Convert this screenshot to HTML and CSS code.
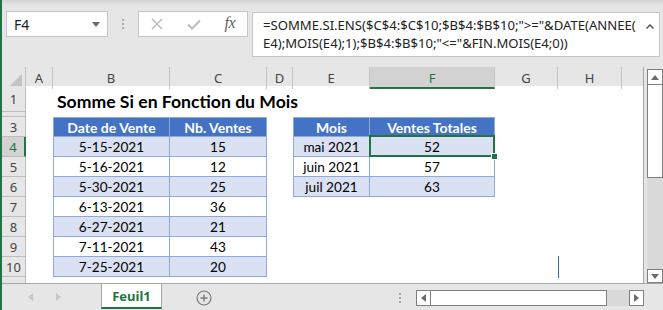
FILE: index.html
```html
<!DOCTYPE html>
<html lang="fr">
<head>
<meta charset="utf-8">
<title>Somme Si en Fonction du Mois</title>
<link rel="stylesheet" href="styles.css">
</head>
<body>
<div class="app">
  <header class="fbar">
    <div class="namebox">
      <span class="nb-text">F4</span>
      <svg class="nb-arrow" width="8" height="5" viewBox="0 0 8 5"><path d="M0 0H8L4 5Z" fill="#6b6b6b"/></svg>
    </div>
    <div class="grip"><i></i><i></i><i></i></div>
    <div class="fbtns">
      <svg width="12" height="12" viewBox="0 0 12 12"><path d="M1 1L11 11M11 1L1 11" stroke="#bcbcbc" stroke-width="1.5" fill="none"/></svg>
      <svg width="14" height="11" viewBox="0 0 14 11"><path d="M1 5.5L5 9.5L13 1.5" stroke="#bcbcbc" stroke-width="2" fill="none"/></svg>
      <span class="fx">fx</span>
    </div>
    <div class="formula">
      <div class="ftext">=SOMME.SI.ENS($C$4:$C$10;$B$4:$B$10;"&gt;="&amp;DATE(ANNEE(<br>E4);MOIS(E4);1);$B$4:$B$10;"&lt;="&amp;FIN.MOIS(E4;0))</div>
      <svg class="caret" width="8" height="5" viewBox="0 0 8 5"><path d="M0.5 4.5L4 1L7.5 4.5" stroke="#555" stroke-width="1.5" fill="none"/></svg>
    </div>
  </header>

  <div class="main">
    <div class="sheet">
      <div class="row r-hdr">
        <div class="corner"><span class="tri"></span></div>
        <div class="ch">A</div><div class="ch">B</div><div class="ch">C</div><div class="ch">D</div>
        <div class="ch">E</div><div class="ch sel">F</div><div class="ch">G</div><div class="ch">H</div><div class="ch last"></div>
      </div>
      <div class="row r-1">
        <div class="rh">1</div><div></div>
        <div class="title">Somme Si en Fonction du Mois</div>
      </div>
      <div class="row r-2">
        <div class="rh"></div>
      </div>
      <div class="row r-n">
        <div class="rh">3</div><div></div>
        <div class="t th first">Date de Vente</div><div class="t th">Nb. Ventes</div><div></div>
        <div class="t th first">Mois</div><div class="t th">Ventes Totales</div>
      </div>
      <div class="row r-n">
        <div class="rh sel">4</div><div></div>
        <div class="t band first">5-15-2021</div><div class="t band">15</div><div></div>
        <div class="t band first">mai 2021</div><div class="t band active">52</div>
      </div>
      <div class="row r-n">
        <div class="rh">5</div><div></div>
        <div class="t first">5-16-2021</div><div class="t">12</div><div></div>
        <div class="t first">juin 2021</div><div class="t">57</div>
      </div>
      <div class="row r-n">
        <div class="rh">6</div><div></div>
        <div class="t band first">5-30-2021</div><div class="t band">25</div><div></div>
        <div class="t band first">juil 2021</div><div class="t band">63</div>
      </div>
      <div class="row r-n">
        <div class="rh">7</div><div></div>
        <div class="t first">6-13-2021</div><div class="t">36</div>
      </div>
      <div class="row r-n">
        <div class="rh">8</div><div></div>
        <div class="t band first">6-27-2021</div><div class="t band">21</div>
      </div>
      <div class="row r-n">
        <div class="rh">9</div><div></div>
        <div class="t first">7-11-2021</div><div class="t">43</div>
      </div>
      <div class="row r-n">
        <div class="rh">10</div><div></div>
        <div class="t band first">7-25-2021</div><div class="t band">20</div>
        <div></div><div></div><div></div><div></div><div class="cursor"></div>
      </div>
      <div class="row r-last">
        <div class="rh cut">11</div>
      </div>
    </div>
    <div class="vscroll">
      <div class="sbtn up"><svg width="8" height="5" viewBox="0 0 8 5"><path d="M0 5H8L4 0Z" fill="#6b6b6b"/></svg></div>
      <div class="vthumb"></div>
      <div class="vtrack"></div>
      <div class="sbtn down"><svg width="8" height="5" viewBox="0 0 8 5"><path d="M0 0H8L4 5Z" fill="#6b6b6b"/></svg></div>
    </div>
  </div>

  <footer class="tabbar">
    <div class="nav">
      <svg class="nl" width="5" height="8" viewBox="0 0 5 8"><path d="M5 0V8L0 4Z" fill="#c8c8c8"/></svg>
      <svg class="nr" width="5" height="8" viewBox="0 0 5 8"><path d="M0 0V8L5 4Z" fill="#c8c8c8"/></svg>
    </div>
    <div class="tab">Feuil1</div>
    <svg class="plus" width="16" height="16" viewBox="0 0 16 16"><circle cx="8" cy="8" r="7" stroke="#7a7a7a" stroke-width="1.2" fill="none"/><path d="M8 4.5V11.5M4.5 8H11.5" stroke="#7a7a7a" stroke-width="1.4"/></svg>
    <div class="grip tgrip"><i></i><i></i><i></i></div>
    <div class="hscroll">
      <div class="hbtn"><svg width="5" height="8" viewBox="0 0 5 8"><path d="M5 0V8L0 4Z" fill="#6b6b6b"/></svg></div>
      <div class="hthumb"></div>
      <div class="htrack"></div>
      <div class="hbtn right"><svg width="5" height="8" viewBox="0 0 5 8"><path d="M0 0V8L5 4Z" fill="#6b6b6b"/></svg></div>
    </div>
  </footer>
</div>
</body>
</html>
```

FILE: styles.css
```css
* { box-sizing: border-box; }
html, body { margin: 0; padding: 0; }
body { width: 663px; height: 310px; overflow: hidden; background: #e6e6e6; }

.app {
  width: 663px;
  height: 310px;
  border-left: 2px solid #217346;
  background: #e6e6e6;
  font-family: "Noto Sans", "Open Sans", sans-serif;
  color: #222;
}

/* formula bar */
.fbar {
  height: 67px;
  display: flex;
  align-items: flex-start;
  padding: 11px 0 0 4px;
  background: linear-gradient(#d4d4d4 0, #e6e6e6 6px);
}
.namebox {
  width: 102px;
  height: 26px;
  background: #fff;
  border: 1px solid #c6c6c6;
  display: flex;
  align-items: center;
  padding: 0 7px 0 7px;
  font-size: 14px;
}
.nb-text { flex: 1; color: #222; }
.grip {
  width: 2px;
  margin: 8px 14px 0 14px;
  display: flex;
  flex-direction: column;
  gap: 2px;
}
.grip i { display: block; width: 2px; height: 2px; background: #a8a8a8; }
.fbtns {
  width: 110px;
  height: 26px;
  background: #fff;
  border: 1px solid #c6c6c6;
  display: flex;
  align-items: center;
  justify-content: space-around;
}
.fx {
  font-family: "Liberation Serif", serif;
  font-style: italic;
  font-size: 16px;
  color: #606060;
  letter-spacing: -0.5px;
  line-height: 1;
  margin-top: -2px;
}
.formula {
  width: 408px;
  height: 45px;
  margin-left: 4px;
  margin-top: 1px;
  background: #fff;
  border: 1px solid #c6c6c6;
  display: flex;
  align-items: flex-start;
  padding: 3px 5px 0 10px;
}
.ftext {
  flex: 1;
  font-size: 13.1px;
  line-height: 18px;
  color: #222;
  white-space: nowrap;
  overflow: hidden;
}
.caret { margin-top: 8px; flex: none; }

/* sheet */
.main { display: flex; height: 216px; }
.sheet {
  width: 642px;
  height: 216px;
  background: #fff;
  border-right: 1px solid #a6a6a6;
}
.row {
  display: grid;
  grid-template-columns: 24px 27px 117px 97px 26px 77px 125px 63px 64px 21px;
}
.r-hdr { height: 19px; background: #e6e6e6; }
.r-1 { height: 26px; }
.r-2 { height: 5px; }
.r-n { height: 20px; }
.r-last { height: 6px; overflow: hidden; }

.corner { position: relative; border-right: 1px solid #c4c4c4; }
.tri {
  position: absolute;
  right: 3px;
  bottom: 3px;
  width: 12px;
  height: 12px;
  background: #c3c3c3;
  clip-path: polygon(100% 0, 100% 100%, 0 100%);
}
.ch {
  border-right: 1px solid #c4c4c4;
  font-size: 13px;
  color: #444;
  display: flex;
  align-items: center;
  justify-content: center;
}
.ch.last { border-right: 0; }
.ch.sel {
  background: #d2d2d2;
  color: #217346;
  border-bottom: 2px solid #217346;
  padding-top: 2px;
}

.rh {
  background: #e6e6e6;
  border-right: 1px solid #bdbdbd;
  border-bottom: 1px solid #bdbdbd;
  font-size: 13px;
  color: #444;
  display: flex;
  align-items: center;
  justify-content: center;
}
.rh.sel {
  background: #d2d2d2;
  color: #217346;
  border-right: 2px solid #217346;
}
.rh.cut { align-items: flex-start; padding-top: 1px; }

.title {
  grid-column: 3 / 10;
  font-family: "Lato", "Liberation Sans", sans-serif;
  font-weight: 700;
  font-size: 17.6px;
  color: #000;
  padding: 4px 0 0 4px;
  display: flex;
  align-items: center;
}

.t {
  font-family: "Lato", "Liberation Sans", sans-serif;
  font-size: 13.6px;
  color: #000;
  border-right: 1px solid #8eaadb;
  border-bottom: 1px solid #8eaadb;
  display: flex;
  align-items: center;
  justify-content: center;
  padding-top: 1px;
}
.t.first { border-left: 1px solid #8eaadb; }
.t.th {
  background: #4472c4;
  color: #fff;
  font-weight: 700;
  font-size: 14px;
  border-top: 1px solid #8eaadb;
}
.t.band { background: #d9e1f2; }
.t.active { position: relative; }
.t.active::after {
  content: "";
  position: absolute;
  left: -1px; right: -1px; top: -2px; bottom: -1px;
  border: 2px solid #217346;
}
.t.active::before {
  content: "";
  position: absolute;
  right: -3px;
  bottom: -3px;
  width: 5px;
  height: 5px;
  background: #217346;
  box-shadow: 0 0 0 1px #fff;
  z-index: 2;
}
.cursor { border-left: 1px solid #3363cf; margin-top: -1px; margin-bottom: -1px; }

/* vertical scrollbar */
.vscroll {
  width: 16px;
  margin: 2px 0 0 3px;
  height: 214px;
  display: flex;
  flex-direction: column;
}
.sbtn {
  height: 16px;
  background: #fff;
  border: 1px solid #7f7f7f;
  display: flex;
  align-items: center;
  justify-content: center;
}
.sbtn.down { height: 14px; }
.vthumb {
  height: 93px;
  background: #fff;
  border: 1px solid #7f7f7f;
  border-top: 0;
}
.vtrack { flex: 1; background: #dadada; }

/* tab bar */
.tabbar {
  height: 27px;
  border-top: 1px solid #a6a6a6;
  display: flex;
  align-items: stretch;
}
.nav { width: 99px; display: flex; align-items: center; }
.nl { margin-left: 26px; }
.nr { margin-left: 23px; }
.tab {
  width: 61px;
  background: #fff;
  border-left: 1px solid #a6a6a6;
  border-right: 1px solid #a6a6a6;
  border-bottom: 2px solid #217346;
  margin-bottom: 1px;
  color: #217346;
  font-weight: 700;
  font-size: 13px;
  display: flex;
  align-items: center;
  justify-content: center;
  padding-top: 1px;
}
.plus { align-self: center; margin-left: 34px; margin-top: 2px; }
.tgrip { margin: 0; align-self: center; margin-left: 187px; margin-top: 2px; }
.hscroll {
  margin-left: 15px;
  width: 228px;
  height: 16px;
  align-self: center;
  margin-top: 2px;
  display: flex;
}
.hbtn {
  width: 15px;
  background: #fff;
  border: 1px solid #7f7f7f;
  display: flex;
  align-items: center;
  justify-content: center;
}
.hthumb {
  width: 176px;
  background: #fff;
  border: 1px solid #7f7f7f;
  border-left: 0;
}
.htrack { flex: 1; background: #dadada; }
```
